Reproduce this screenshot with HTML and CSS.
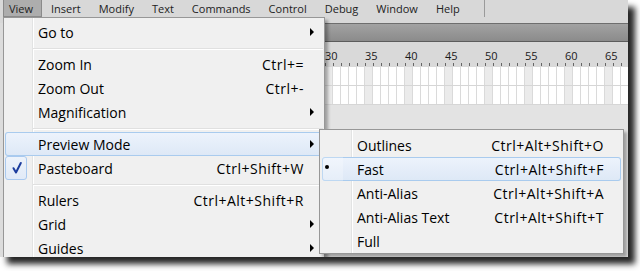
FILE: index.html
```html
<!DOCTYPE html>
<html>
<head>
<meta charset="utf-8">
<link rel="stylesheet" href="styles.css">
</head>
<body>
<div class="screen">
  <div class="menubar">
    <span class="mb-item active">View</span>
    <span class="mb-item">Insert</span>
    <span class="mb-item">Modify</span>
    <span class="mb-item">Text</span>
    <span class="mb-item">Commands</span>
    <span class="mb-item">Control</span>
    <span class="mb-item">Debug</span>
    <span class="mb-item">Window</span>
    <span class="mb-item">Help</span>
    <span class="mb-sep"></span>
  </div>
  <div class="workspace">
    <div class="side"></div>
    <div class="timeline">
      <div class="tl-bar"></div>
      <div class="ruler">
        <span class="num">30</span><span class="num">35</span><span class="num">40</span><span class="num">45</span><span class="num">50</span><span class="num">55</span><span class="num">60</span><span class="num">65</span>
      </div>
      <div class="frames">
        <div class="frow"></div>
        <div class="frow"></div>
      </div>
    </div>
  </div>

  <div class="menu main-menu">
    <div class="mi"><span class="ico"></span><span class="lbl">Go to</span><span class="arr"><i class="tri"></i></span></div>
    <div class="msep"></div>
    <div class="mi"><span class="ico"></span><span class="lbl">Zoom In</span><span class="kbd">Ctrl+=</span><span class="arr"></span></div>
    <div class="mi"><span class="ico"></span><span class="lbl">Zoom Out</span><span class="kbd">Ctrl+-</span><span class="arr"></span></div>
    <div class="mi"><span class="ico"></span><span class="lbl">Magnification</span><span class="arr"><i class="tri"></i></span></div>
    <div class="msep"></div>
    <div class="mi hl"><span class="ico"></span><span class="lbl">Preview Mode</span><span class="arr"><i class="tri"></i></span></div>
    <div class="mi"><span class="ico checked"><svg width="22" height="24" viewBox="0 0 22 24"><path d="M8.5 12.2 L11 16.5 L15.8 7" fill="none" stroke="#1d3d9e" stroke-width="2" stroke-linecap="round" stroke-linejoin="round"/></svg></span><span class="lbl">Pasteboard</span><span class="kbd">Ctrl+Shift+W</span><span class="arr"></span></div>
    <div class="msep"></div>
    <div class="mi"><span class="ico"></span><span class="lbl">Rulers</span><span class="kbd">Ctrl+Alt+Shift+R</span><span class="arr"></span></div>
    <div class="mi"><span class="ico"></span><span class="lbl">Grid</span><span class="arr"><i class="tri"></i></span></div>
    <div class="mi"><span class="ico"></span><span class="lbl">Guides</span><span class="arr"><i class="tri"></i></span></div>
  </div>

  <div class="menu sub-menu">
    <div class="si"><span class="ico"></span><span class="lbl">Outlines</span><span class="kbd">Ctrl+Alt+Shift+O</span></div>
    <div class="si hl"><span class="ico radio"><i class="dot"></i></span><span class="lbl">Fast</span><span class="kbd">Ctrl+Alt+Shift+F</span></div>
    <div class="si"><span class="ico"></span><span class="lbl">Anti-Alias</span><span class="kbd">Ctrl+Alt+Shift+A</span></div>
    <div class="si"><span class="ico"></span><span class="lbl">Anti-Alias Text</span><span class="kbd">Ctrl+Alt+Shift+T</span></div>
    <div class="si"><span class="ico"></span><span class="lbl">Full</span></div>
  </div>
</div>
</body>
</html>
```
FILE: styles.css
```css
* { box-sizing: border-box; }
html, body { height: 271px; }
body {
  margin: 0;
  background: #fff;
  font-family: "Open Sans", "Noto Sans", sans-serif;
}
.screen {
  position: relative;
  width: 628px;
  height: 257px;
  overflow: hidden;
  background: #e3e3e3;
  display: flex;
  flex-direction: column;
  box-shadow: 7px 7px 6px rgba(0, 0, 0, 0.85);
}
/* menubar */
.menubar {
  height: 23px;
  flex-shrink: 0;
  background: #d8d8d8;
  display: flex;
  align-items: flex-start;
  padding-left: 3px;
  font-size: 11px;
  color: #222;
}
.mb-item {
  height: 17px;
  line-height: 17px;
  padding: 0 8px 0 5px;
  margin-right: 3px;
  border: 1px solid transparent;
  border-top: 0;
}
.mb-item.active {
  background: #adadad;
  border-color: #8a8a8a;
}
.mb-sep {
  width: 1px;
  height: 17px;
  margin-left: 12px;
  background: #9a9a9a;
}
/* workspace */
.workspace {
  display: flex;
  flex: 1;
}
.side {
  width: 325px;
  flex-shrink: 0;
  background: #dcdcdc;
}
.timeline {
  flex: 1;
  display: flex;
  flex-direction: column;
}
.tl-bar {
  height: 19px;
  border-top: 1px solid #6e6e6e;
  border-bottom: 1px solid #5c5c5c;
  background: linear-gradient(#a2a2a2, #8b8b8b);
}
.ruler {
  height: 25px;
  display: flex;
  background:
    repeating-linear-gradient(to right, #666 0 1px, transparent 1px 8px) 0 21px / 100% 3px no-repeat,
    #d9d9d9;
  font-size: 11px;
  color: #1a1a1a;
}
.num {
  width: 40px;
  flex-shrink: 0;
  line-height: 1;
  padding-top: 8px;
}
.frames {
  display: flex;
  flex-direction: column;
}
.frow {
  height: 19px;
  border-bottom: 1px solid #d6d6d6;
  background: linear-gradient(to right,
    #ebebeb 0 7px, #dadada 7px 8px,
    #fff 8px 15px, #dadada 15px 16px,
    #fff 16px 23px, #dadada 23px 24px,
    #fff 24px 31px, #dadada 31px 32px,
    #fff 32px 39px, #dadada 39px 40px) 0 0 / 40px 100%;
}
/* menus */
.menu {
  position: absolute;
  background: #f0f0f0;
  border: 1px solid #979797;
  box-shadow: 3px 3px 3px rgba(0, 0, 0, 0.3);
  font-size: 14px;
  color: #000;
}
.main-menu {
  left: 3px;
  top: 17px;
  width: 322px;
  padding: 2px 0;
  background:
    linear-gradient(#e2e3e3, #e2e3e3) 28px 0 / 1px 100% no-repeat,
    linear-gradient(#fff, #fff) 29px 0 / 1px 100% no-repeat,
    #f0f0f0;
}
.mi {
  display: flex;
  align-items: center;
  height: 24px;
  margin: 0 1px;
  border-radius: 3px;
}
.mi .ico {
  width: 22px;
  height: 24px;
  flex-shrink: 0;
  border-radius: 3px;
}
.mi .ico.checked {
  border: 1px solid #a9c9ef;
  background: linear-gradient(#edf3fb, #e1eaf7);
}
.mi .ico svg { display: block; margin: -1px; }
.mi .lbl {
  flex: 1;
  margin-left: 11px;
  white-space: nowrap;
}
.kbd {
  white-space: nowrap;
  letter-spacing: 0.5px;
}
.mi .arr {
  width: 19px;
  flex-shrink: 0;
  display: flex;
  align-items: center;
}
.tri {
  display: block;
  margin-left: 6px;
  width: 0;
  height: 0;
  border-top: 4px solid transparent;
  border-bottom: 4px solid transparent;
  border-left: 4px solid #000;
}
.msep {
  height: 8px;
  margin-left: 29px;
  margin-right: 1px;
  background:
    linear-gradient(#e0e0e0, #e0e0e0) 0 4px / 100% 1px no-repeat,
    linear-gradient(#fff, #fff) 0 5px / 100% 1px no-repeat;
}
.hl {
  box-shadow: inset 0 0 0 1px #a9cbee;
  background: linear-gradient(#edf3fc, #dde8f6);
}
.sub-menu {
  left: 319px;
  top: 129px;
  width: 305px;
  padding: 3px 0 0;
  background:
    linear-gradient(#e2e3e3, #e2e3e3) 31px 0 / 1px 100% no-repeat,
    linear-gradient(#fff, #fff) 32px 0 / 1px 100% no-repeat,
    #f0f0f0;
}
.si {
  display: flex;
  align-items: center;
  height: 24px;
  margin: 0 2px;
  padding-right: 17px;
  border-radius: 3px;
}
.si .ico {
  width: 21px;
  height: 24px;
  flex-shrink: 0;
  position: relative;
}
.si .ico.radio {
  background: rgba(255, 255, 255, 0.25);
}
.dot {
  position: absolute;
  left: 3px;
  top: 8px;
  width: 4px;
  height: 4px;
  border-radius: 50%;
  background: #000;
}
.si .lbl {
  flex: 1;
  margin-left: 14px;
  white-space: nowrap;
}
```
